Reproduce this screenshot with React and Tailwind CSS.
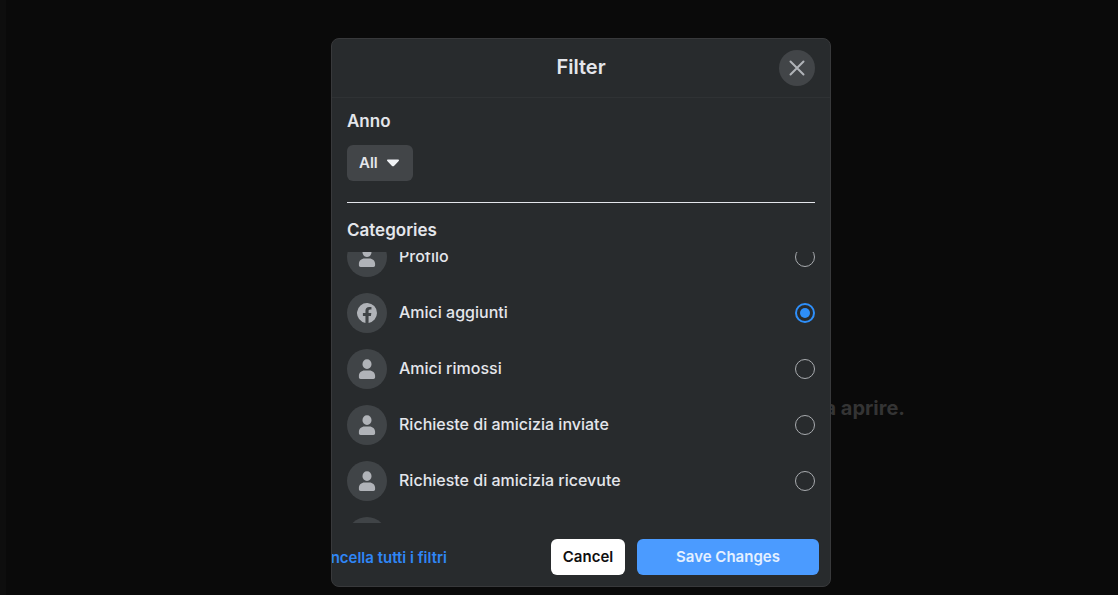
import { useLayoutEffect, useRef, useState } from 'react';

const CATEGORIES = [
  { id: 'profile', label: 'Profilo', icon: 'person' },
  { id: 'added', label: 'Amici aggiunti', icon: 'facebook' },
  { id: 'removed', label: 'Amici rimossi', icon: 'person' },
  { id: 'sent', label: 'Richieste di amicizia inviate', icon: 'person' },
  { id: 'received', label: 'Richieste di amicizia ricevute', icon: 'person' },
  { id: 'other', label: 'Altro', icon: 'person' },
];

function PersonIcon() {
  return (
    <svg viewBox="0 0 20 20" className="size-5 fill-[#b0b3b8]" aria-hidden="true">
      <path d="M10 0.2c-2.700 0-4.500 2.100-4.500 4.900 0 2.700 1.900 4.900 4.500 4.900s4.500-2.200 4.500-4.900C14.500 2.300 12.700 0.200 10 0.200z" />
      <path d="M7.600 11.500C4.400 11.500 1.900 13.800 1.900 16.800v1.500c0 1 .7 1.700 1.700 1.700h12.800c1 0 1.700-.7 1.700-1.700v-1.500c0-3-2.500-5.300-5.700-5.300z" />
    </svg>
  );
}

function FacebookIcon() {
  return (
    <svg viewBox="0 0 20 20" className="size-5 fill-[#b0b3b8]" aria-hidden="true">
      <path d="M20 10a10 10 0 1 0-11.560 9.880V12.890H5.900V10h2.540V7.800c0-2.510 1.490-3.890 3.770-3.890 1.100 0 2.240.2 2.240.2v2.460h-1.260c-1.240 0-1.630.77-1.630 1.560V10h2.780l-.45 2.890h-2.330v6.990A10 10 0 0 0 20 10z" />
    </svg>
  );
}

function CategoryRow({ category, checked, onSelect }) {
  return (
    <label className="flex h-14 cursor-pointer items-center gap-3">
      <span className="flex size-10 shrink-0 items-center justify-center rounded-full bg-[#404447]">
        {category.icon === 'facebook' ? <FacebookIcon /> : <PersonIcon />}
      </span>
      <span className="flex-1 pb-0.5 text-base leading-6 font-medium text-[#e4e6eb]">{category.label}</span>
      <input
        type="radio"
        name="category"
        checked={checked}
        onChange={() => onSelect(category.id)}
        className="grid size-5 shrink-0 appearance-none place-items-center rounded-full border border-[#a8abaf] before:size-[10px] before:rounded-full checked:border-2 checked:border-[#2e8ffa] checked:before:bg-[#2e8ffa]"
      />
    </label>
  );
}

export default function App() {
  const [year, setYear] = useState('all');
  const [selected, setSelected] = useState('added');
  const listRef = useRef(null);

  // Start with the first row partly scrolled away
  useLayoutEffect(() => {
    listRef.current.scrollTop = 23;
  }, []);

  return (
    <div className="relative min-h-screen border-l-[6px] border-[#0e0e0e] bg-[#0a0a0a] font-['Inter','Liberation_Sans',sans-serif] text-[#e4e6eb]">
      <p className="absolute top-[396px] right-[213px] text-xl leading-6 font-bold text-[#343434]">da aprire.</p>

      <div className="relative flex justify-center pt-[38px] pb-2 pl-[38px]">
        <section
          role="dialog"
          aria-labelledby="filter-title"
          className="w-full max-w-[500px] overflow-hidden rounded-lg border border-[#38393b] bg-[#282b2d]"
        >
          <header className="grid grid-cols-[36px_1fr_36px] items-center border-b border-[#2f3234] px-[15px] py-[11px]">
            <h1 id="filter-title" className="col-start-2 pb-0.5 text-center text-xl leading-6 font-semibold">Filter</h1>
            <button type="button" aria-label="Close" className="flex size-9 items-center justify-center rounded-full bg-[#424548]">
              <svg viewBox="0 0 16 16" className="size-4 stroke-[#b0b3b8]" strokeWidth="2" strokeLinecap="round" aria-hidden="true">
                <path d="M1.500 1.500l13 13M14.500 1.500l-13 13" />
              </svg>
            </button>
          </header>

          <div className="px-[15px] pt-[11px]">
            <label htmlFor="year" className="block text-[17px] leading-6 font-semibold">Anno</label>
            <div className="relative mt-3 w-[66px]">
              <select
                id="year"
                value={year}
                onChange={(e) => setYear(e.target.value)}
                className="h-9 w-full appearance-none rounded-md bg-[#424548] pl-3 text-[15px] font-semibold text-[#e4e6eb]"
              >
                <option value="all">All</option>
              </select>
              <svg viewBox="0 0 12 8" className="pointer-events-none absolute top-[14px] right-[14px] h-2 w-3 fill-[#f0f2f5]" aria-hidden="true">
                <path d="M1 .5h10c.9 0 1.300 1 .7 1.600L7 6.900c-.6.6-1.400.6-2 0L.3 2.100C-.3 1.500.1.500 1 .5z" />
              </svg>
            </div>
            <hr className="mt-[21px] border-[#e4e6eb]" />
            <h2 className="mt-[15px] text-[17px] leading-6 font-semibold">Categories</h2>
            <div ref={listRef} className="mt-[10px] h-[271px] overflow-y-auto [scrollbar-width:none]">
              {CATEGORIES.map((category) => (
                <CategoryRow
                  key={category.id}
                  category={category}
                  checked={selected === category.id}
                  onSelect={setSelected}
                />
              ))}
            </div>
          </div>

          <footer className="flex items-center justify-end gap-3 px-[11px] pt-4 pb-[11px] text-[15px] font-semibold">
            <button type="button" className="mr-[92px] shrink-0 pt-0.5 whitespace-nowrap text-[#2f86f6]">Cancella tutti i filtri</button>
            <button type="button" className="h-9 w-[74px] shrink-0 rounded-md bg-white text-[#0f0f0f]">Cancel</button>
            <button type="button" className="h-9 w-[182px] shrink-0 rounded-md bg-[#4b9bff] text-[#e4f0ff]">Save Changes</button>
          </footer>
        </section>
      </div>
    </div>
  );
}
